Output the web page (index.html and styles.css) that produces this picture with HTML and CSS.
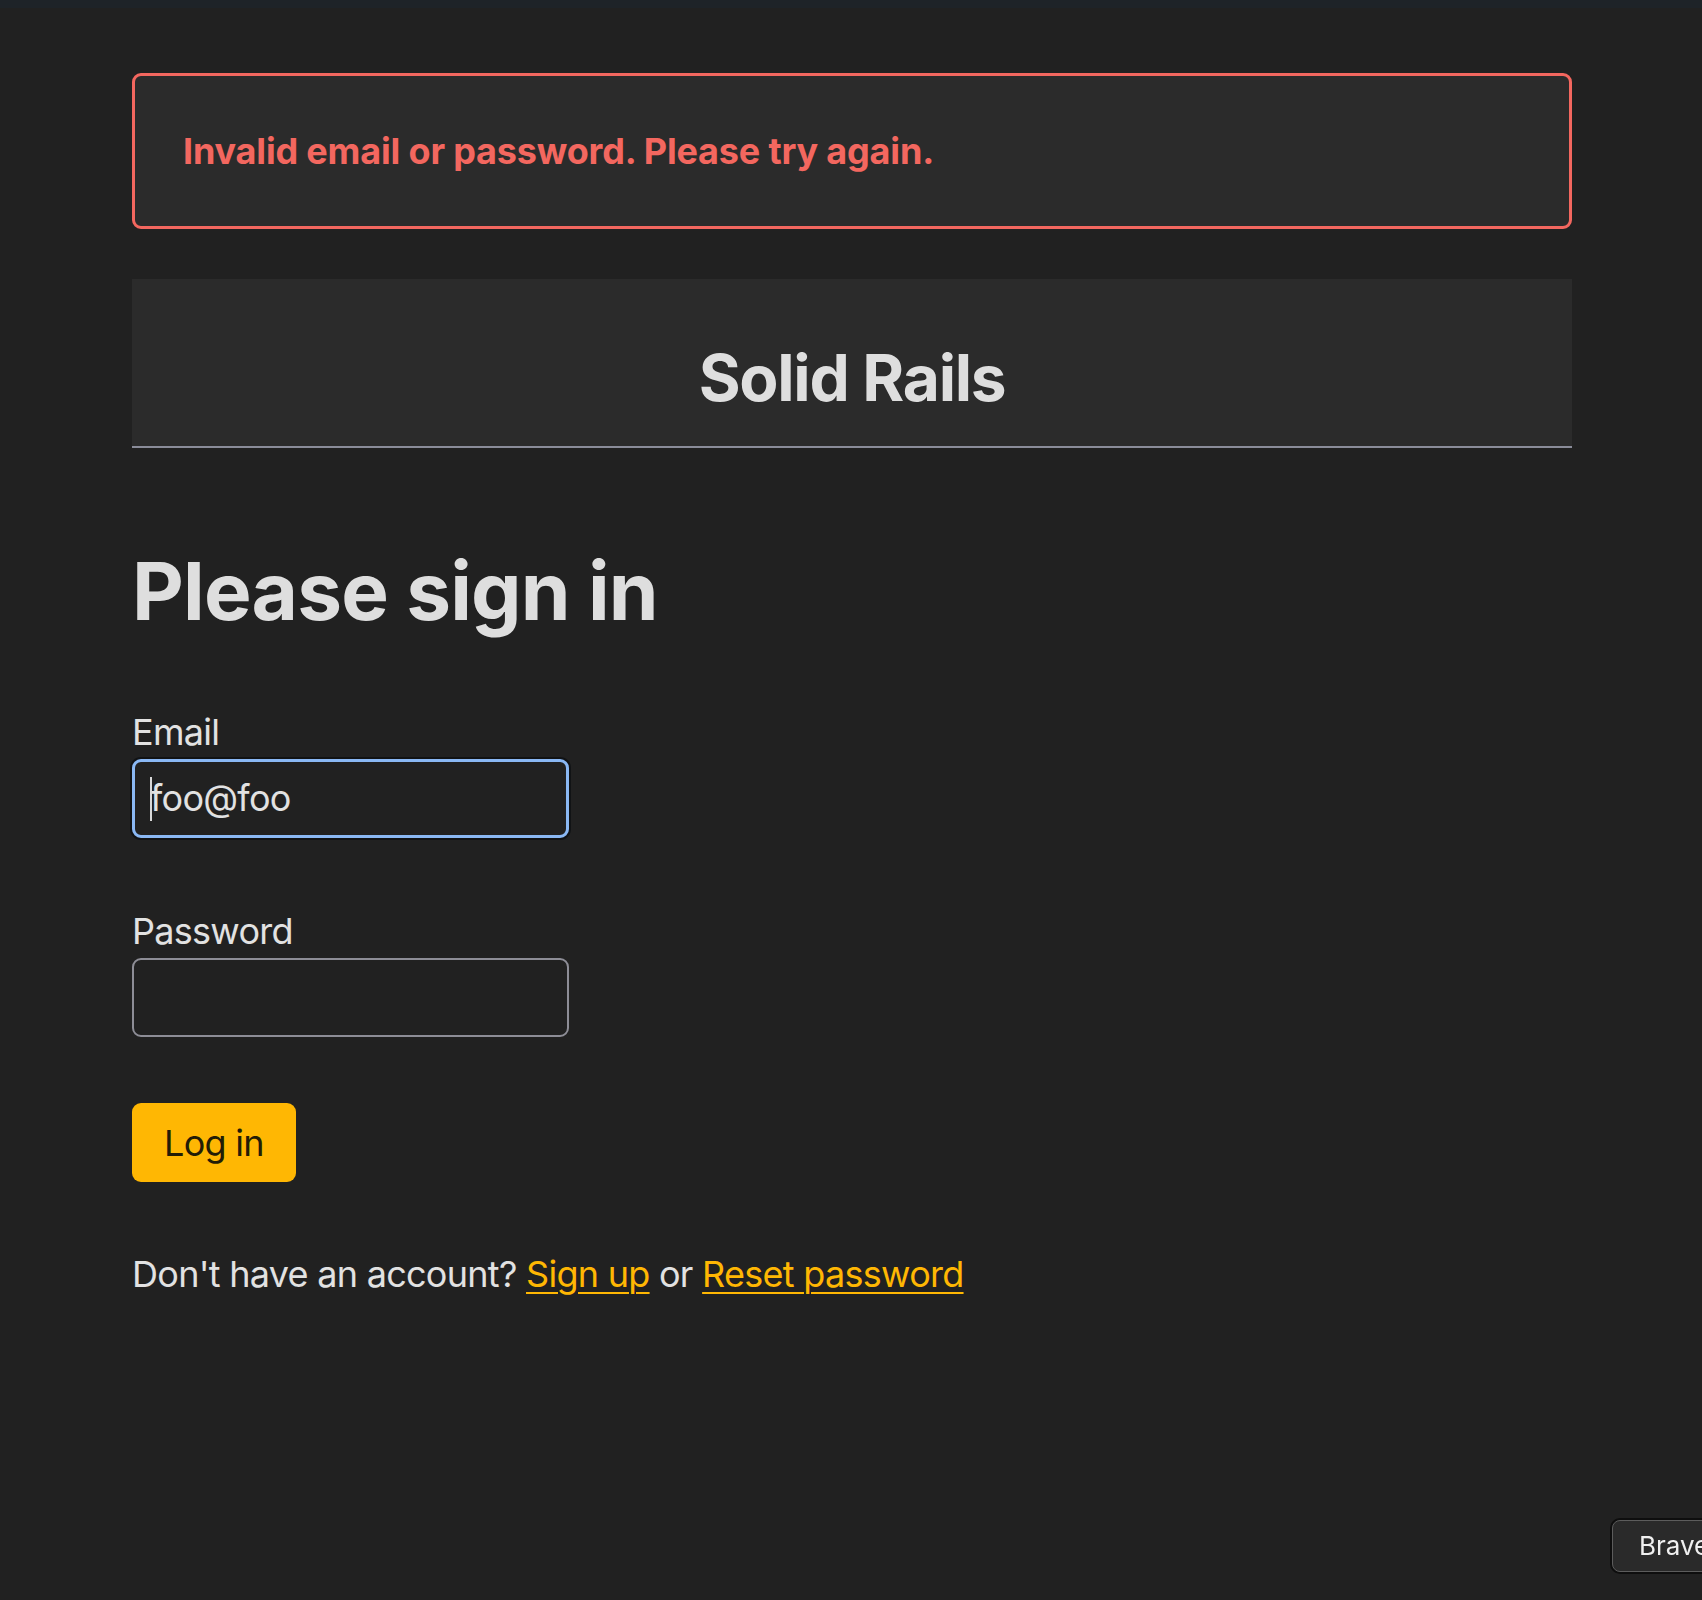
FILE: index.html
```html
<!DOCTYPE html>
<html lang="en">
<head>
<meta charset="utf-8">
<title>Solid Rails – Sign in</title>
<link rel="stylesheet" href="styles.css">
</head>
<body>
<div class="topbar"></div>
<main class="container">
  <div class="alert">Invalid email or password. Please try again.</div>
  <header class="site-header">
    <h1 class="brand">Solid Rails</h1>
  </header>
  <h2 class="page-title">Please sign in</h2>
  <form class="form">
    <div class="field">
      <label class="label" for="email">Email</label>
      <div class="input-wrap">
        <input class="input input-focused" id="email" type="text" value="foo@foo">
        <span class="caret"></span>
      </div>
    </div>
    <div class="field">
      <label class="label" for="password">Password</label>
      <div class="input-wrap">
        <input class="input" id="password" type="password">
      </div>
    </div>
    <div class="actions">
      <button class="btn" type="button">Log in</button>
    </div>
  </form>
  <p class="footer-text">Don't have an account? <a class="link" href="#">Sign up</a> or <a class="link" href="#">Reset password</a></p>
</main>
<div class="brave-pill">Brave</div>
</body>
</html>
```
FILE: styles.css
```css
html, body {
  margin: 0;
  padding: 0;
}
body {
  background: #212121;
  color: #e2e2e2;
  font-family: Inter, "Noto Sans", "Liberation Sans", sans-serif;
  font-size: 36px;
  line-height: 1.5;
  letter-spacing: -0.02em;
  min-height: 1600px;
  overflow: hidden;
}
.topbar {
  height: 8px;
  background: #1e2328;
}
.container {
  width: 1440px;
  margin: 0 auto;
  padding-top: 65px;
  box-sizing: border-box;
  position: relative;
  left: 1px;
}
.alert {
  background: #2b2b2b;
  border: 3px solid #f3675f;
  border-radius: 9px;
  padding: 48px 48px;
  color: #f3675f;
  font-weight: 700;
  letter-spacing: -0.005em;
}
.site-header {
  margin-top: 50px;
  background: #2b2b2b;
  border-bottom: 2px solid #8a8c99;
  padding: 61px 0 29px;
  text-align: center;
}
.brand {
  margin: 0;
  font-size: 64px;
  line-height: 1.2;
  font-weight: 700;
  color: #dedede;
  letter-spacing: -0.02em;
}
.page-title {
  margin: 95px 0 0;
  font-size: 80px;
  line-height: 1.2;
  font-weight: 700;
  color: #dedede;
  letter-spacing: -0.01em;
}
.form {
  margin-top: 66px;
  display: flex;
  flex-direction: column;
  gap: 66px;
}
.field {
  display: flex;
  flex-direction: column;
}
.label {
  color: #e2e2e2;
  line-height: 54px;
}
.input-wrap {
  position: relative;
  width: 437px;
}
.input {
  box-sizing: border-box;
  width: 437px;
  height: 79px;
  background: #212121;
  border: 2px solid #8d8d96;
  border-radius: 9px;
  padding: 10px 16px 11px;
  font-family: Inter, "Noto Sans", "Liberation Sans", sans-serif;
  font-size: 36px;
  line-height: 54px;
  letter-spacing: -0.02em;
  color: #e2e2e2;
  outline: none;
  display: block;
}
.input-focused {
  border: 3px solid #8ab8f4;
  padding-left: 15px;
  box-shadow: 0 0 0 2px #111315;
}
.caret {
  position: absolute;
  left: 18px;
  top: 18px;
  width: 2px;
  height: 44px;
  background: #d8d8d8;
}
.actions {
  display: flex;
}
.btn {
  background: #ffb703;
  color: #231c06;
  border: none;
  border-radius: 9px;
  padding: 13px 32px 12px;
  height: 79px;
  font-family: Inter, "Noto Sans", "Liberation Sans", sans-serif;
  font-size: 36px;
  line-height: 54px;
  letter-spacing: -0.02em;
  cursor: pointer;
}
.footer-text {
  margin: 65px 0 0;
  line-height: 54px;
  color: #e2e2e2;
}
.link {
  color: #ffb703;
  text-decoration: underline;
  text-decoration-thickness: 2px;
  text-underline-offset: 5px;
}
.brave-pill {
  position: fixed;
  left: 1612px;
  top: 1520px;
  width: 160px;
  height: 52px;
  box-sizing: border-box;
  background: #2a2a2a;
  border: 1.5px solid #5c5c5c;
  border-radius: 8px;
  box-shadow: 0 0 0 2px #0e0e0e;
  color: #f0f0f0;
  font-size: 26px;
  line-height: 49px;
  letter-spacing: 0;
  padding-left: 26px;
  white-space: nowrap;
}
```
